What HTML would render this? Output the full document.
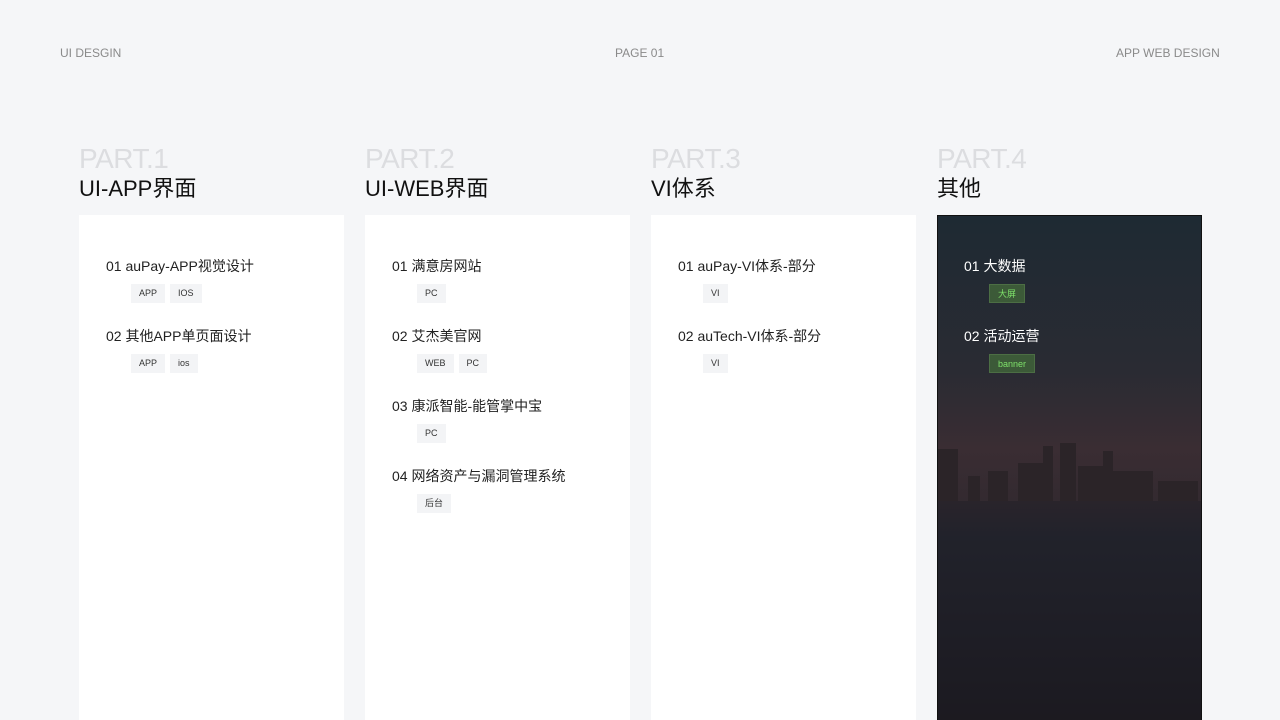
<!DOCTYPE html>
<html><head><meta charset="utf-8"><style>
*{margin:0;padding:0;box-sizing:border-box}
html,body{width:1280px;height:720px;overflow:hidden}
body{background:#f5f6f8;font-family:"Liberation Sans","Noto Sans CJK SC",sans-serif;position:relative}
.hd{position:absolute;top:46px;font-size:12px;color:#8a8a8a}
.col{position:absolute;top:140px;width:265px}
.part{font-size:28px;color:#dcdde0;line-height:38px;letter-spacing:-0.5px}
.tt{font-size:22px;color:#111;line-height:26px;margin-top:-2px}
.card{position:absolute;top:75px;left:0;width:265px;height:520px;background:#fff;padding-top:40px}
.it{margin-left:27px;height:70px}
.it .n{font-size:14px;color:#222;line-height:22px}
.tags{margin-left:25px;margin-top:7px;display:flex;gap:5px}
.tg{height:19px;padding:0 8px;background:#f3f4f6;font-size:9px;color:#333;line-height:19px}
.dark{background:linear-gradient(180deg,#1e2a33 0%,#2a2b33 30%,#3a2d33 45%,#332a30 55%,#232730 62%,#1d1e26 80%,#171519 100%);border:1px solid #111;padding-top:39px}
.dark .it{margin-left:26px}
.dark .n{color:#fff}
.dark .tg{background:#3c5a38;color:#7ee06a;border:1px solid #4c6e44}
</style></head><body>
<div class="hd" style="left:60px">UI DESGIN</div>
<div class="hd" style="left:615px">PAGE 01</div>
<div class="hd" style="left:1116px">APP WEB DESIGN</div>

<div class="col" style="left:79px"><div class="part">PART.1</div><div class="tt">UI-APP界面</div>
<div class="card">
<div class="it"><div class="n">01 auPay-APP视觉设计</div><div class="tags"><span class="tg">APP</span><span class="tg">IOS</span></div></div>
<div class="it"><div class="n">02 其他APP单页面设计</div><div class="tags"><span class="tg">APP</span><span class="tg">ios</span></div></div>
</div></div>

<div class="col" style="left:365px"><div class="part">PART.2</div><div class="tt">UI-WEB界面</div>
<div class="card">
<div class="it"><div class="n">01 满意房网站</div><div class="tags"><span class="tg">PC</span></div></div>
<div class="it"><div class="n">02 艾杰美官网</div><div class="tags"><span class="tg">WEB</span><span class="tg">PC</span></div></div>
<div class="it"><div class="n">03 康派智能-能管掌中宝</div><div class="tags"><span class="tg">PC</span></div></div>
<div class="it"><div class="n">04 网络资产与漏洞管理系统</div><div class="tags"><span class="tg">后台</span></div></div>
</div></div>

<div class="col" style="left:651px"><div class="part">PART.3</div><div class="tt">VI体系</div>
<div class="card">
<div class="it"><div class="n">01 auPay-VI体系-部分</div><div class="tags"><span class="tg">VI</span></div></div>
<div class="it"><div class="n">02 auTech-VI体系-部分</div><div class="tags"><span class="tg">VI</span></div></div>
</div></div>

<div class="col" style="left:937px"><div class="part">PART.4</div><div class="tt">其他</div>
<div class="card dark">
<svg style="position:absolute;left:0;top:0" width="263" height="520"><g fill="#2b2428">
<rect x="0" y="233" width="20" height="52"/><rect x="30" y="260" width="12" height="25"/><rect x="50" y="255" width="20" height="30"/><rect x="80" y="247" width="35" height="38"/><rect x="105" y="230" width="10" height="55"/><rect x="122" y="227" width="16" height="58"/><rect x="140" y="250" width="30" height="35"/><rect x="165" y="235" width="10" height="50"/><rect x="175" y="255" width="40" height="30"/><rect x="220" y="265" width="40" height="20"/></g>
<rect x="0" y="285" width="263" height="235" fill="#1f1e26" opacity=".5"/></svg>
<div style="position:relative">
<div class="it"><div class="n">01 大数据</div><div class="tags"><span class="tg">大屏</span></div></div>
<div class="it"><div class="n">02 活动运营</div><div class="tags"><span class="tg">banner</span></div></div>
</div></div></div>
</body></html>
